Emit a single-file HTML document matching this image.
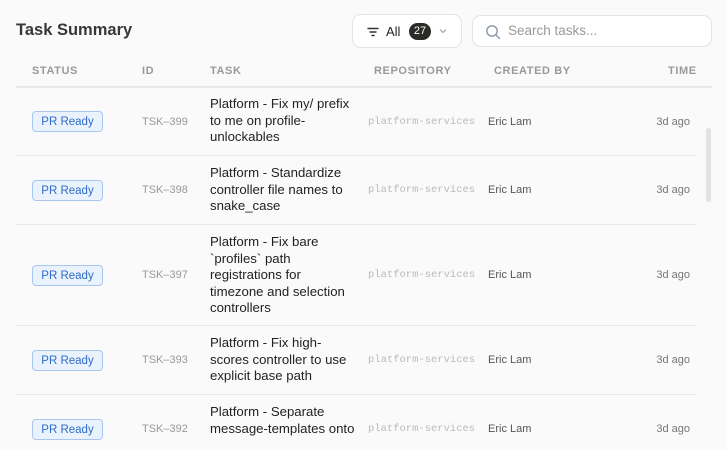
<!DOCTYPE html><html><head><style>
*{margin:0;padding:0;box-sizing:border-box}
html,body{width:726px;height:450px;overflow:hidden}
body{background:#fafafa;font-family:"Liberation Sans",sans-serif;position:relative;color:#222}
.t{position:absolute;left:16px;top:21px;font-size:16.5px;font-weight:bold;color:#383838}
.f{position:absolute;left:352px;top:14px;width:110px;height:34px;border:1px solid #e4e4e4;border-radius:9px;background:#fff;font-size:13px}
.s{position:absolute;left:472px;top:15px;width:240px;height:32px;border:1px solid #e4e4e4;border-radius:9px;background:#fff;font-size:13.5px;color:#999}
.h{position:absolute;top:65px;font-size:11px;color:#999;font-weight:bold;letter-spacing:.6px}
.hl{position:absolute;left:16px;width:696px;top:86px;height:2px;background:#e8e8e8}
.row{position:absolute;left:16px;width:680px;border-bottom:1px solid #e8e8e8}
.b{position:absolute;left:16px;width:71px;height:21px;border:1px solid #a9c6ee;background:#eaf2fd;border-radius:4px;color:#2f6cc8;font-size:11.5px;text-align:center;line-height:20px}
.id{position:absolute;left:126px;font-size:11px;color:#999}
.tk{position:absolute;left:194px;white-space:nowrap;font-size:13.2px;line-height:16.5px;color:#222}
.rp{position:absolute;left:352px;font-family:"Liberation Mono",monospace;font-size:10.5px;color:#bbb}
.cb{position:absolute;left:472px;font-size:11px;color:#555}
.tm{position:absolute;right:6px;font-size:11px;color:#777}
.sb{position:absolute;left:706px;top:128px;width:5px;height:74px;background:#e2e2e2;border-radius:3px}
</style></head><body>
<div class="t">Task Summary</div>
<div class="f"><svg style="position:absolute;left:14px;top:12px" width="12" height="10" viewBox="0 0 12 10"><path d="M1 1.5h10M3 5h6M5 8.5h2" stroke="#333" stroke-width="1.4" stroke-linecap="round"/></svg><span style="position:absolute;left:33px;top:9px">All</span><span style="position:absolute;left:56px;top:8px;width:22px;height:17px;border-radius:9px;background:#2a2a26;color:#fff;font-size:11px;text-align:center;line-height:17px">27</span><svg style="position:absolute;left:86px;top:13px" width="8" height="6" viewBox="0 0 8 6"><path d="M1 1.5l3 3 3-3" stroke="#999" fill="none" stroke-width="1"/></svg></div>
<div class="s"><svg style="position:absolute;left:12px;top:8px" width="16" height="16" viewBox="0 0 16 16"><circle cx="7" cy="7" r="5.2" stroke="#8a96a8" stroke-width="1.4" fill="none"/><path d="M11 11l3.5 3.5" stroke="#8a96a8" stroke-width="1.4" stroke-linecap="round"/></svg><span style="position:absolute;left:35px;top:7px">Search tasks...</span></div>
<div class="h" style="left:32px">STATUS</div><div class="h" style="left:142px">ID</div><div class="h" style="left:210px">TASK</div><div class="h" style="left:374px">REPOSITORY</div><div class="h" style="left:494px">CREATED BY</div><div class="h" style="left:668px">TIME</div>
<div class="hl"></div>

<div class="row" style="top:88px;height:68px"><div class="b" style="top:23px">PR Ready</div><div class="id" style="top:28px">TSK–399</div><div class="tk" style="top:8px">Platform - Fix my/ prefix<br>to me on profile-<br>unlockables</div><div class="rp" style="top:28px">platform-services</div><div class="cb" style="top:28px">Eric Lam</div><div class="tm" style="top:28px">3d ago</div></div>
<div class="row" style="top:156px;height:69px"><div class="b" style="top:24px">PR Ready</div><div class="id" style="top:28px">TSK–398</div><div class="tk" style="top:9px">Platform - Standardize<br>controller file names to<br>snake_case</div><div class="rp" style="top:28px">platform-services</div><div class="cb" style="top:28px">Eric Lam</div><div class="tm" style="top:28px">3d ago</div></div>
<div class="row" style="top:225px;height:101px"><div class="b" style="top:40px">PR Ready</div><div class="id" style="top:44px">TSK–397</div><div class="tk" style="top:9px">Platform - Fix bare<br>`profiles` path<br>registrations for<br>timezone and selection<br>controllers</div><div class="rp" style="top:44px">platform-services</div><div class="cb" style="top:44px">Eric Lam</div><div class="tm" style="top:44px">3d ago</div></div>
<div class="row" style="top:326px;height:69px"><div class="b" style="top:24px">PR Ready</div><div class="id" style="top:28px">TSK–393</div><div class="tk" style="top:9px">Platform - Fix high-<br>scores controller to use<br>explicit base path</div><div class="rp" style="top:28px">platform-services</div><div class="cb" style="top:28px">Eric Lam</div><div class="tm" style="top:28px">3d ago</div></div>
<div class="row" style="top:395px;height:55px;border:none"><div class="b" style="top:24px">PR Ready</div><div class="id" style="top:28px">TSK–392</div><div class="tk" style="top:9px">Platform - Separate<br>message-templates onto</div><div class="rp" style="top:28px">platform-services</div><div class="cb" style="top:28px">Eric Lam</div><div class="tm" style="top:28px">3d ago</div></div>
<div class="sb"></div>
</body></html>
